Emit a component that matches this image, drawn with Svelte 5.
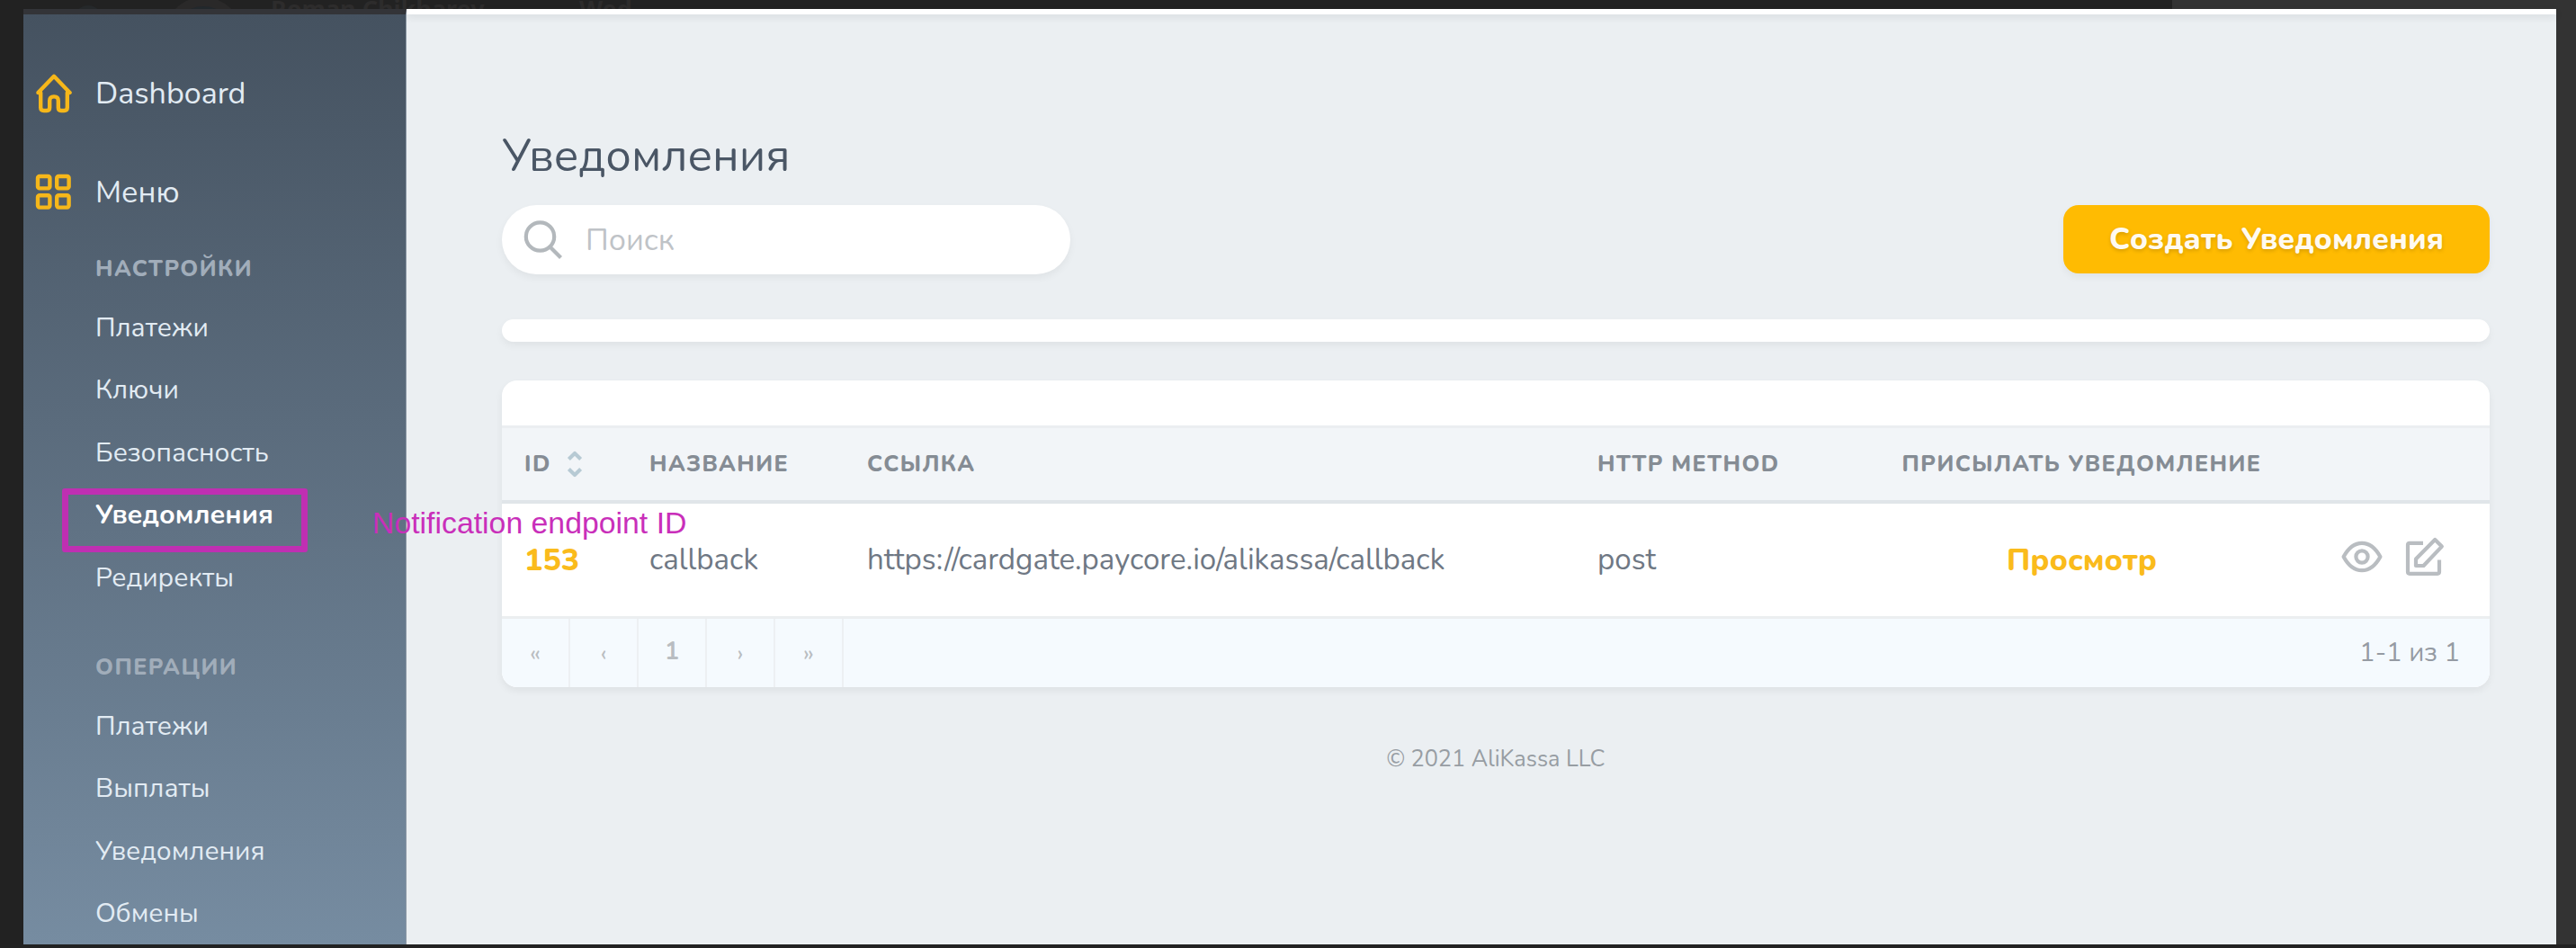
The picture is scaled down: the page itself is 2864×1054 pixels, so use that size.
<script>
  const settings = ['Платежи', 'Ключи', 'Безопасность', 'Уведомления', 'Редиректы'];
  const operations = ['Платежи', 'Выплаты', 'Уведомления', 'Обмены'];
  const active = 'Уведомления';
  const rows = [
    { id: 153, name: 'callback', url: 'https://cardgate.paycore.io/alikassa/callback', method: 'post' }
  ];
  const pages = ['«', '‹', '1', '›', '»'];
</script>

<div class="screen">
  <div class="backdrop">
    <span class="disc small"></span>
    <span class="disc"></span>
    <span class="person">Roman Chikharev</span>
    <span class="day">Wed</span>
    <span class="panel"></span>
  </div>

  <div class="window">
    <aside class="sidebar">
      <a class="nav home">
        <svg class="nav-icon" viewBox="0 0 42 44" width="42" height="44">
          <path d="M21 2.8 L38.6 21 H35.8 V37.5 Q35.8 41 32.3 41 H29 Q25.8 41 25.8 37.5 V30 Q25.8 25.4 21 25.4 Q16.2 25.4 16.2 30 V37.5 Q16.2 41 13 41 H9.7 Q6.2 41 6.2 37.5 V21 H3.4 Z" />
        </svg>
        <span>Dashboard</span>
      </a>
      <a class="nav menu">
        <svg class="nav-icon" viewBox="0 0 42 42" width="42" height="42">
          <rect x="3" y="3" width="13.4" height="13.4" rx="2" />
          <rect x="24.2" y="3" width="13.4" height="13.4" rx="2" />
          <rect x="3" y="24.2" width="13.4" height="13.4" rx="2" />
          <rect x="24.2" y="24.2" width="13.4" height="13.4" rx="2" />
        </svg>
        <span>Меню</span>
      </a>
      <h4 class="group first">Настройки</h4>
      <ul>
        {#each settings as item}
          <li class:active={item === active}>{item}</li>
        {/each}
      </ul>
      <h4 class="group">Операции</h4>
      <ul>
        {#each operations as item}
          <li>{item}</li>
        {/each}
      </ul>
    </aside>

    <main>
      <div class="topbar"></div>
      <div class="content">
        <h1>Уведомления</h1>
        <div class="toolbar">
          <div class="search">
            <svg viewBox="0 0 44 44" width="44" height="44">
              <circle cx="18.5" cy="18" r="15.7" />
              <path d="M29.5 29.5 L41.5 41.5" />
            </svg>
            <span>Поиск</span>
          </div>
          <button>Создать Уведомления</button>
        </div>
        <div class="bar"></div>

        <section class="card">
          <div class="row head">
            <span class="sortable">ID
              <svg viewBox="0 0 20 32" width="20" height="32">
                <path d="M3.4 10.4 L10 4 L16.6 10.4" />
                <path d="M3.4 21.6 L10 28 L16.6 21.6" />
              </svg>
            </span>
            <span>Название</span>
            <span>Ссылка</span>
            <span>HTTP Method</span>
            <span class="center">Присылать уведомление</span>
            <span></span>
          </div>
          {#each rows as row}
            <div class="row body">
              <b>{row.id}</b>
              <span>{row.name}</span>
              <span>{row.url}</span>
              <span>{row.method}</span>
              <b class="center">Просмотр</b>
              <span class="actions">
                <svg viewBox="0 0 46 36" width="46" height="36">
                  <path d="M2.6 18 C8 8 14.5 2.8 23 2.8 C31.5 2.8 38 8 43.4 18 C38 28 31.5 33.2 23 33.2 C14.5 33.2 8 28 2.6 18 Z" />
                  <circle cx="23" cy="18" r="6.6" />
                </svg>
                <svg viewBox="0 0 44 44" width="44" height="44">
                  <path d="M20 6.8 H5 Q3 6.8 3 8.8 V38.8 Q3 40.8 5 40.8 H36 Q38 40.8 38 38.8 V25.5" />
                  <path d="M33.2 3 L40.8 10.6 L20.5 32 H12 V24.5 Z" />
                </svg>
              </span>
            </div>
          {/each}
          <div class="footer">
            <div class="pages">
              {#each pages as p}
                <span class:current={p === '1'}>{p}</span>
              {/each}
            </div>
            <span class="range">1-1 из 1</span>
          </div>
        </section>
        <p class="copy">© 2021 AliKassa LLC</p>
      </div>
    </main>
  </div>

  <div class="marker"></div>
  <div class="note">Notification endpoint ID</div>
</div>

<style>
  :global(body) { background: #222; }
  * { box-sizing: border-box; }
  .screen {
    position: relative;
    width: 2864px;
    height: 1054px;
    padding: 10px 22px 4px 26px;
    overflow: hidden;
    background: #222;
    font-family: Nunito, 'Open Sans', sans-serif;
  }
  .backdrop { position: absolute; inset: 0; overflow: hidden; }
  .backdrop span { position: absolute; white-space: nowrap; }
  .person, .day { top: -5px; font: 700 27px/30px 'Noto Sans', sans-serif; color: #2d2c2c; }
  .person { left: 301px; }
  .day { left: 644px; }
  .disc { left: 182px; top: -3px; width: 88px; height: 88px; border: 10px solid #2a2929; border-radius: 50%; background: #22282c; }
  .disc.small { left: 82px; top: 6px; width: 32px; height: 32px; border: 0; background: #25282a; }
  .panel { left: 2415px; right: 0; top: 0; bottom: 4px; background: #333; }

  .window { position: relative; display: flex; height: 1040px; }
  .sidebar {
    width: 426px;
    flex: none;
    border-top: 6px solid #333438;
    border-right: 1px solid #8d99a6;
    background: linear-gradient(#455260, #768ca1);
    color: #e2ebf3;
    overflow: hidden;
  }
  .nav { display: flex; align-items: center; height: 60px; padding-left: 13px; font-size: 34px; }
  .nav span { margin-left: 25px; }
  .nav-icon { flex: none; fill: none; stroke: #f6b71a; stroke-width: 4.4; stroke-linejoin: round; }
  .home { margin-top: 58px; }
  .menu { margin-top: 50px; }
  .group {
    height: 40px;
    margin: 45px 0 11px 80px;
    font-size: 25px;
    line-height: 40px;
    font-weight: 800;
    letter-spacing: 1.5px;
    text-transform: uppercase;
    color: #a1adba;
  }
  .group.first { margin-top: 35px; }
  ul { margin: 0; padding: 0 0 0 80px; list-style: none; }
  li { height: 69.4px; line-height: 69.4px; font-size: 29.8px; }
  li.active { font-weight: 700; font-size: 30.2px; color: #fff; }

  main { flex: 1; background: #ebeff2; }
  .topbar { height: 6px; background: #fff; box-shadow: 0 3px 8px rgba(0, 0, 0, 0.09); }
  .content { padding: 128px 74px 0 106px; }
  h1 { margin: 0; height: 60px; line-height: 60px; font-size: 50.7px; font-weight: 400; color: #4a5665; }
  .toolbar { display: flex; justify-content: space-between; margin-top: 24px; }
  .search {
    display: flex;
    align-items: center;
    width: 632px;
    height: 77px;
    padding-left: 24px;
    border-radius: 39px;
    background: #fff;
    box-shadow: 0 4px 8px rgba(0, 0, 0, 0.05);
    color: #bfc3c7;
    font-size: 34px;
  }
  .search svg { fill: none; stroke: #b3b8bc; stroke-width: 4.2; }
  .search span { margin-left: 25px; }
  button {
    width: 474px;
    height: 76px;
    padding: 0;
    border: 0;
    border-radius: 17px;
    background: #ffbb02;
    box-shadow: 0 4px 8px rgba(0, 0, 0, 0.05);
    color: #fffaf0;
    font: 800 33.7px Nunito, 'Open Sans', sans-serif;
    text-shadow: 0 2px 4px rgba(0, 0, 0, 0.16);
    white-space: nowrap;
  }
  .bar { height: 25px; margin-top: 50px; border-radius: 13px; background: #fff; box-shadow: 0 4px 8px rgba(0, 0, 0, 0.05); }

  .card {
    margin-top: 43px;
    padding-top: 50px;
    border-radius: 17px;
    overflow: hidden;
    background: #fff;
    box-shadow: 0 4px 8px rgba(0, 0, 0, 0.06);
  }
  .row {
    display: grid;
    grid-template-columns: 139px 242px 812px 337.5px 402px 1fr;
    align-items: center;
    padding: 0 50px 0 25px;
    white-space: nowrap;
  }
  .center { text-align: center; }
  .head {
    height: 87px;
    border-top: 3px solid #ebeef1;
    border-bottom: 4px solid #e0e5e9;
    background: #f2f5f8;
    color: #858c94;
    font-size: 25px;
    font-weight: 800;
    letter-spacing: 1.45px;
    text-transform: uppercase;
  }
  .sortable { display: flex; align-items: center; gap: 16px; }
  .head svg { fill: none; stroke: #b7cad4; stroke-width: 4.2; stroke-linejoin: round; }
  .body { height: 125px; color: #6f7884; font-size: 33.1px; }
  .body b { font-size: 34px; font-weight: 800; color: #fabb1c; }
  .actions { display: flex; align-items: center; justify-content: flex-end; gap: 25px; margin-top: -8px; }
  .actions svg { fill: none; stroke: #b9bdc1; stroke-width: 4.2; stroke-linejoin: round; }

  .footer {
    display: flex;
    justify-content: space-between;
    align-items: center;
    height: 79px;
    padding-right: 33px;
    border-top: 3px solid #ebeef0;
    background: #f5fafe;
  }
  .pages { display: flex; height: 100%; }
  .pages span {
    width: 76px;
    border-right: 2px solid #edf0f3;
    line-height: 77px;
    text-align: center;
    font-size: 27px;
    color: #b9bdc1;
  }
  .pages .current { font-weight: 700; line-height: 73px; }
  .range { margin-top: -2px; font-size: 29.3px; color: #959ba3; }
  .copy { margin: 60px 0 0; height: 40px; line-height: 40px; text-align: center; font-size: 25.3px; color: #979da3; }

  .marker {
    position: absolute;
    left: 69px;
    top: 543px;
    width: 273px;
    height: 71px;
    border: 7.5px solid #bf2fb2;
    border-radius: 3px;
  }
  .note {
    position: absolute;
    left: 414px;
    top: 561px;
    font: 33.8px/40px 'Liberation Sans', sans-serif;
    color: #c92fba;
    white-space: nowrap;
  }
</style>
